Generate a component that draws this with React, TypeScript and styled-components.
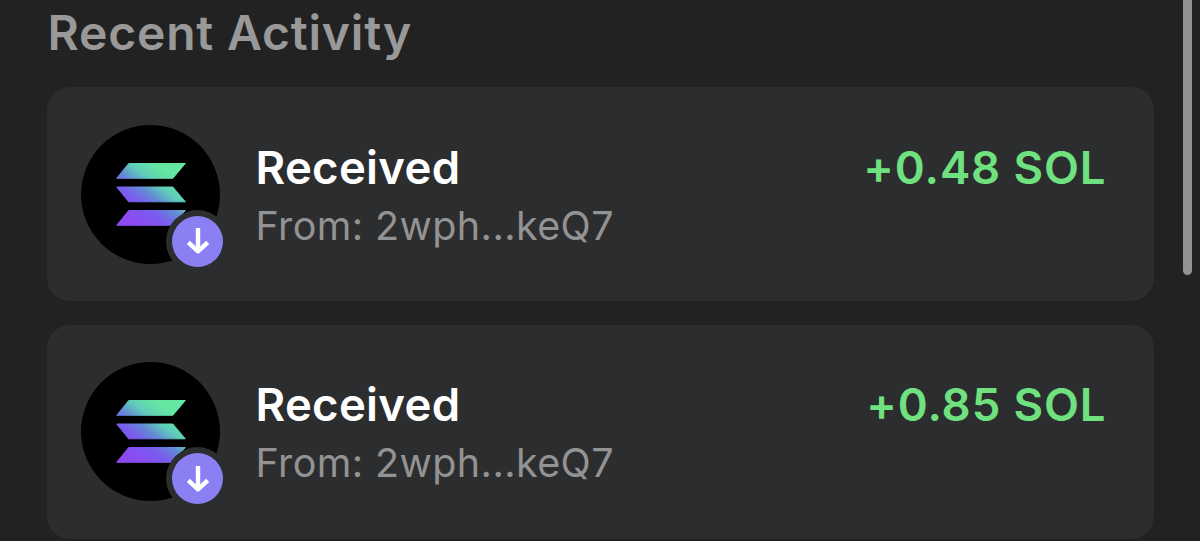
import { FC } from "react";
import styled, { createGlobalStyle } from 'styled-components';


const Colors = {
    background: '#222222',
    card: '#2c2d2f',
    white: '#ffffff',
    fontColorLight: '#999999',
    fontColorMuted: '#939394',
    green: '#6fe27f',
    purple: '#8b80f3',
    scrollbar: '#929292',
};

const GlobalStyle = createGlobalStyle`
    * {
        box-sizing: border-box;
    }
    body {
        margin: 0;
        overflow: hidden;
        background-color: ${Colors.background};
        font-family: Inter, sans-serif;
    }
    h2, p {
        margin: 0;
    }
`;

const Wrapper = styled.div`
    display: flex;
    justify-content: space-between;
    height: 541px;
    padding: 0 8px 0 47px;
    overflow: hidden;
`;

const Content = styled.section`
    width: 1107px;
    padding-top: 3px;
`;

const Heading = styled.h2`
    height: 84px;
    padding-left: 0.5px;
    color: ${Colors.fontColorLight};
    font-size: 48px;
    font-weight: 600;
    line-height: 60px;
    letter-spacing: 0.8px;
    white-space: nowrap;
`;

const ActivityList = styled.div`
    display: flex;
    flex-direction: column;
    gap: 23.5px;
`;

const ActivityCard = styled.div`
    display: flex;
    align-items: flex-start;
    height: 214px;
    padding: 37.5px 47.5px 0 34px;
    border-radius: 23px;
    background-color: ${Colors.card};
`;

const TokenIcon = styled.div`
    position: relative;
    flex: none;
    display: flex;
    align-items: center;
    justify-content: center;
    width: 139px;
    height: 139px;
    border-radius: 50%;
    background-color: black;
`;

const Badge = styled.div`
    position: absolute;
    right: -9px;
    bottom: -9px;
    display: flex;
    align-items: center;
    justify-content: center;
    width: 63px;
    height: 63px;
    border-radius: 50%;
    background-color: ${Colors.card};
`;

const BadgeCircle = styled.div`
    display: flex;
    align-items: center;
    justify-content: center;
    width: 51px;
    height: 51px;
    border-radius: 50%;
    background-color: ${Colors.purple};
`;

const ActivityInfo = styled.div`
    flex: 1;
    padding: 15px 0 0 35.5px;
    white-space: nowrap;
`;

const ActivityTitle = styled.p`
    color: ${Colors.white};
    font-size: 45.5px;
    font-weight: 600;
    line-height: 56px;
    letter-spacing: 0.3px;
`;

const ActivityFrom = styled.p`
    padding-top: 5px;
    color: ${Colors.fontColorMuted};
    font-size: 39.5px;
    font-weight: 400;
    line-height: 50px;
    letter-spacing: 0.4px;
`;

const Amount = styled.p`
    padding-top: 15px;
    color: ${Colors.green};
    font-size: 45.5px;
    font-weight: 600;
    line-height: 56px;
    letter-spacing: 0.9px;
    white-space: nowrap;
`;

const Scrollbar = styled.div`
    width: 9px;
    height: 275px;
    border-radius: 0 0 5px 5px;
    background-color: ${Colors.scrollbar};
`;

interface IActivity {
    id: number;
    title: string;
    from: string;
    amount: string;
}

const activities: IActivity[] = [
    { id: 1, title: 'Received', from: '2wph...keQ7', amount: '+0.48 SOL' },
    { id: 2, title: 'Received', from: '2wph...keQ7', amount: '+0.85 SOL' },
];

const SolanaLogo: FC<{ gradientId: string }> = ({ gradientId }) => (
    <svg width="70" height="63" viewBox="0 0 70 63">
        <defs>
            <linearGradient id={gradientId} gradientUnits="userSpaceOnUse" x1="10" y1="66" x2="58" y2="2">
                <stop offset="0.14" stopColor="#8c4af3" />
                <stop offset="0.36" stopColor="#7a5cee" />
                <stop offset="0.52" stopColor="#6488d8" />
                <stop offset="0.68" stopColor="#60cdb8" />
                <stop offset="0.86" stopColor="#65e6a3" />
            </linearGradient>
        </defs>
        <g fill={`url(#${gradientId})`} stroke={`url(#${gradientId})`} strokeWidth="1" strokeLinejoin="round">
            <path d="M12.7 0.5H69.3L56.8 15.3H0.7Z" />
            <path d="M0.7 24H56.8L69.3 38.8H12.7Z" />
            <path d="M12.7 47.5H69.3L56.8 62.3H0.7Z" />
        </g>
    </svg>
);

const ArrowDown: FC = () => (
    <svg width="26" height="28" viewBox="0 0 26 28" fill="none" stroke="white" strokeWidth="4.4">
        <path d="M13 1V24.5" />
        <path d="M3.3 15.3L13 24.3L22.7 15.3" strokeLinejoin="round" />
    </svg>
);

const App: FC = () => {
    return (
        <>
            <GlobalStyle />
            <Wrapper>
                <Content>
                    <Heading>Recent Activity</Heading>
                    <ActivityList>
                        {activities.map(({ id, title, from, amount }) => (
                            <ActivityCard key={id}>
                                <TokenIcon>
                                    <SolanaLogo gradientId={`solana-${id}`} />
                                    <Badge>
                                        <BadgeCircle>
                                            <ArrowDown />
                                        </BadgeCircle>
                                    </Badge>
                                </TokenIcon>
                                <ActivityInfo>
                                    <ActivityTitle>{title}</ActivityTitle>
                                    <ActivityFrom>From: {from}</ActivityFrom>
                                </ActivityInfo>
                                <Amount>{amount}</Amount>
                            </ActivityCard>
                        ))}
                    </ActivityList>
                </Content>
                <Scrollbar />
            </Wrapper>
        </>
    );
}

export default App;
